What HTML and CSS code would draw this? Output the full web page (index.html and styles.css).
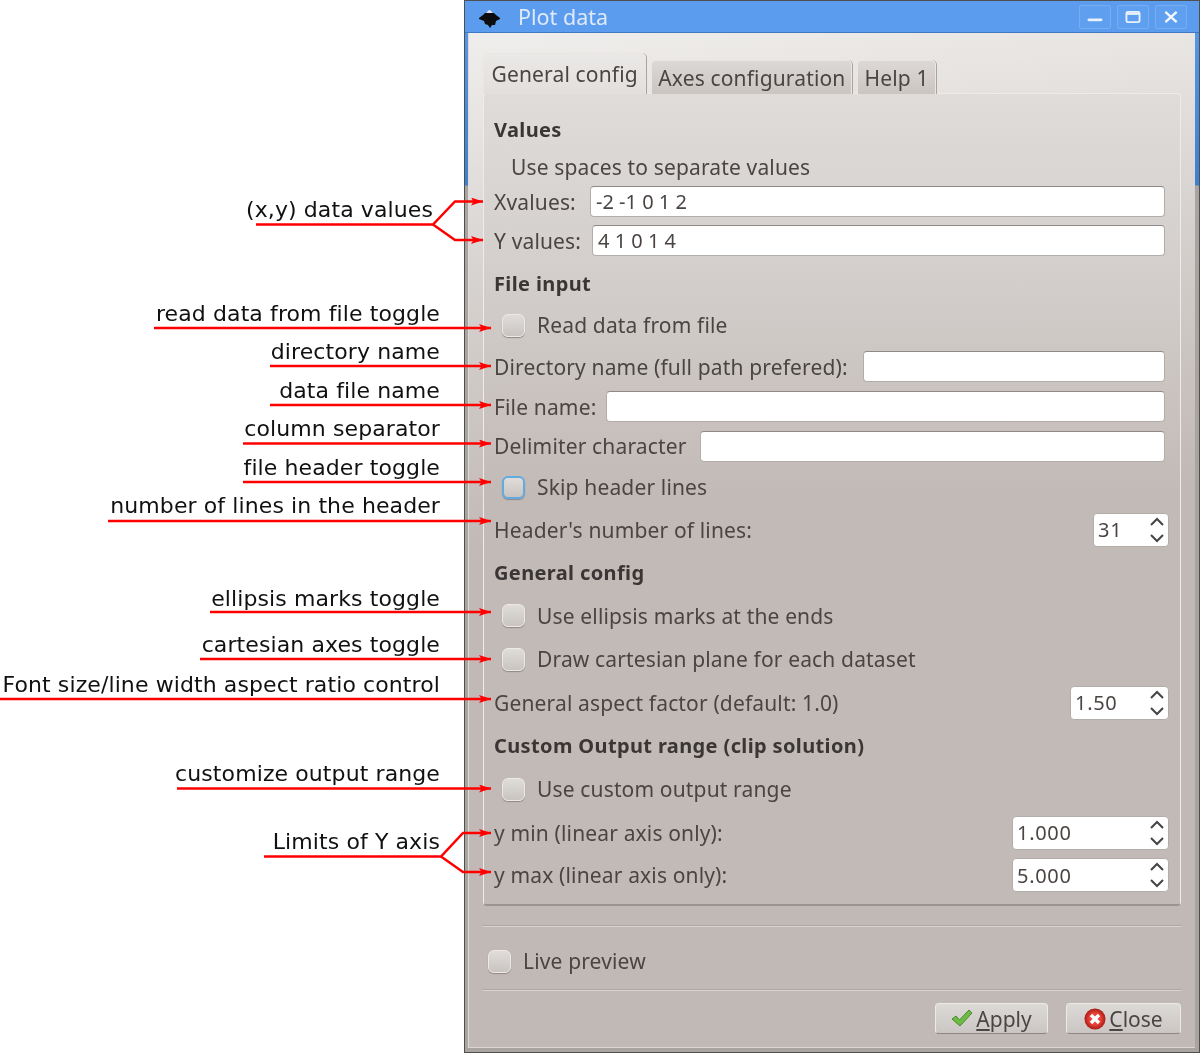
FILE: index.html
```html
<!DOCTYPE html>
<html lang="en">
<head>
<meta charset="utf-8">
<title>Plot data</title>
<link rel="stylesheet" href="styles.css">
</head>
<body>
<main class="window">
  <header class="titlebar">
    <svg class="logo" viewBox="0 0 22 20"><path d="M7.500 5 Q10.500 -1 13.500 5 Z" fill="#e4e6ea"/><path d="M6 5 L15 5 L17 7 L21 10 L21 11 L17 13 L16 17 L13 17 L11 20 L9 17 L6 16 L5 13 L0 11 L0 10 L4 7 Z" fill="#0d0d0f"/></svg>
    <span class="title">Plot data</span>
    <div class="wm-buttons">
      <span class="wm"><svg viewBox="0 0 32 23"><path d="M9.500 14.500 H22.500" stroke="#e8f1fc" stroke-width="3" stroke-linecap="round"/></svg></span>
      <span class="wm"><svg viewBox="0 0 32 23"><rect x="9" y="6" width="14" height="11" rx="1.500" fill="none" stroke="#e8f1fc" stroke-width="2"/><path d="M9 8 H23" stroke="#e8f1fc" stroke-width="2.500"/></svg></span>
      <span class="wm"><svg viewBox="0 0 32 23"><path d="M10 6 L22 17 M22 6 L10 17" stroke="#f4f8fe" stroke-width="2.500"/></svg></span>
    </div>
  </header>
  <div class="content">
    <nav class="tabs">
      <span class="tab tab-active">General config</span>
      <span class="tab">Axes configuration</span>
      <span class="tab">Help 1</span>
    </nav>
    <section class="panel">
      <div class="row"><strong>Values</strong></div>
      <div class="row indent">Use spaces to separate values</div>
      <div class="row"><label class="lx">Xvalues:</label><span class="field">-2 -1 0 1 2</span></div>
      <div class="row"><label class="ly">Y values:</label><span class="field">4 1 0 1 4</span></div>
      <div class="row"><strong>File input</strong></div>
      <div class="row"><span class="check"></span>Read data from file</div>
      <div class="row"><label class="ldir">Directory name (full path prefered):</label><span class="field"></span></div>
      <div class="row"><label class="lfile">File name:</label><span class="field"></span></div>
      <div class="row"><label class="ldelim">Delimiter character</label><span class="field"></span></div>
      <div class="row"><span class="check check-focus"></span>Skip header lines</div>
      <div class="row between"><label>Header's number of lines:</label><span class="spin s31">31<svg class="arrows" viewBox="0 0 16 30"><path d="M2 10 L8 4 L14 10 M2 20 L8 26 L14 20" fill="none" stroke="#444" stroke-width="2"/></svg></span></div>
      <div class="row"><strong>General config</strong></div>
      <div class="row"><span class="check"></span>Use ellipsis marks at the ends</div>
      <div class="row"><span class="check"></span>Draw cartesian plane for each dataset</div>
      <div class="row between"><label>General aspect factor (default: 1.0)</label><span class="spin s150">1.50<svg class="arrows" viewBox="0 0 16 30"><path d="M2 10 L8 4 L14 10 M2 20 L8 26 L14 20" fill="none" stroke="#444" stroke-width="2"/></svg></span></div>
      <div class="row"><strong>Custom Output range (clip solution)</strong></div>
      <div class="row"><span class="check"></span>Use custom output range</div>
      <div class="row between"><label>y min (linear axis only):</label><span class="spin s1000">1.000<svg class="arrows" viewBox="0 0 16 30"><path d="M2 10 L8 4 L14 10 M2 20 L8 26 L14 20" fill="none" stroke="#444" stroke-width="2"/></svg></span></div>
      <div class="row between"><label>y max (linear axis only):</label><span class="spin s1000">5.000<svg class="arrows" viewBox="0 0 16 30"><path d="M2 10 L8 4 L14 10 M2 20 L8 26 L14 20" fill="none" stroke="#444" stroke-width="2"/></svg></span></div>
    </section>
    <hr class="sep sep-first">
    <div class="preview"><span class="check"></span>Live preview</div>
    <hr class="sep">
    <footer class="actions">
      <span class="btn btn-apply"><svg class="btn-icon" viewBox="0 0 22 22"><path d="M1 11 L5 8 L8.500 12 L18 2 L21 5 L9 18 Z" fill="#6cbb45" stroke="#4a8a2c" stroke-width="1"/></svg><span><u>A</u>pply</span></span>
      <span class="btn"><svg class="btn-icon" viewBox="0 0 22 22"><defs><radialGradient id="stop"><stop offset="0.55" stop-color="#e8433a"/><stop offset="1" stop-color="#a81c12"/></radialGradient></defs><circle cx="11" cy="11" r="10.500" fill="url(#stop)"/><path d="M7 7 L15 15 M15 7 L7 15" stroke="#fff" stroke-width="3.500"/></svg><span><u>C</u>lose</span></span>
    </footer>
  </div>
</main>
<svg class="notes" viewBox="0 0 1200 1054">
  <defs>
    <marker id="head" viewBox="0 0 12 8" refX="12" refY="4" markerWidth="12" markerHeight="8" markerUnits="userSpaceOnUse" orient="auto"><path d="M0 0 L12 4 L0 8 L2.500 4 Z" fill="#f00"/></marker>
  </defs>
  <g class="note-lines">
    <path d="M256 224.500 H433 L455 201.500 H483" marker-end="url(#head)"/>
    <path d="M433 224.500 L455 240 H483" marker-end="url(#head)"/>
    <path d="M154 328 H491" marker-end="url(#head)"/>
    <path d="M270 366 H491" marker-end="url(#head)"/>
    <path d="M270 405 H491" marker-end="url(#head)"/>
    <path d="M243 443.500 H491" marker-end="url(#head)"/>
    <path d="M243 482 H491" marker-end="url(#head)"/>
    <path d="M108 521 H491" marker-end="url(#head)"/>
    <path d="M210 612 H491" marker-end="url(#head)"/>
    <path d="M200 659 H491" marker-end="url(#head)"/>
    <path d="M0 699 H491" marker-end="url(#head)"/>
    <path d="M177 788.500 H491" marker-end="url(#head)"/>
    <path d="M264 856.500 H441 L463 833 H491" marker-end="url(#head)"/>
    <path d="M441 856.500 L463 872 H491" marker-end="url(#head)"/>
  </g>
  <g class="note-text">
    <text x="433" y="217">(x,y) data values</text>
    <text x="440" y="321">read data from file toggle</text>
    <text x="440" y="359">directory name</text>
    <text x="440" y="398">data file name</text>
    <text x="440" y="436">column separator</text>
    <text x="440" y="475">file header toggle</text>
    <text x="440" y="513">number of lines in the header</text>
    <text x="440" y="606">ellipsis marks toggle</text>
    <text x="440" y="652">cartesian axes toggle</text>
    <text x="440" y="692">Font size/line width aspect ratio control</text>
    <text x="440" y="781">customize output range</text>
    <text x="440" y="849">Limits of Y axis</text>
  </g>
</svg>
</body>
</html>
```
FILE: styles.css
```css
html, body { margin: 0; padding: 0; background: #fff; }
body { position: relative; width: 1200px; height: 1054px; overflow: hidden; font-family: "Noto Sans", sans-serif; font-size: 21px; letter-spacing: 0.15px; color: #4a4543; }

.window {
  position: absolute; left: 464px; top: 0; width: 736px; height: 1053px; box-sizing: border-box;
  border: 1px solid #4f4f4f; padding: 0 4px 4px 3px;
  display: flex; flex-direction: column;
  background: linear-gradient(#5b9bea 0, #3f7fcf 184px, #aaa4a0 185px);
  filter: blur(0.3px);
}
.titlebar { height: 32px; margin: 0 -4px 0 -3px; padding: 0 12px 0 14px; display: flex; align-items: center; background: #5b9cee; box-shadow: inset 0 -1px 0 #3f79c4; flex: none; }
.logo { width: 22px; height: 20px; margin-top: 2px; }
.title { margin-left: 17px; margin-top: -2px; color: #dfe9f8; font-size: 21.5px; letter-spacing: 0; }
.wm-buttons { margin-left: auto; display: flex; gap: 6px; }
.wm { width: 30px; height: 22px; border: 1px solid #77aef2; background: #5f9fef; border-radius: 2px; display: block; }
.wm svg { display: block; width: 100%; height: 100%; }

.content { flex: 1; padding: 21px 14px 0 14px; display: flex; flex-direction: column; border-bottom: 1px solid #dad6d3; border-left: 1px solid #dedad8;
  background: linear-gradient(174deg, #f0eeec 0, #d6d2cf 250px, #c1b9b5 520px); }

.tabs { display: flex; align-items: flex-end; gap: 5px; height: 40px; position: relative; z-index: 1; margin-bottom: -1px; flex: none; }
.tab { box-sizing: border-box; height: 34px; padding: 0 6px; display: flex; align-items: center; border: 1px solid #e9e6e4; border-bottom: 0; border-radius: 5px 5px 0 0; background: linear-gradient(#dcd8d5, #cbc5c2); box-shadow: 1px 0 0 #a9a3a0; }
.tab-active { height: 41px; padding: 0 7.5px; background: linear-gradient(#ebe9e7, #e2dfdd); }

.panel { box-sizing: border-box; height: 813px; padding: 17px 15px 0 10px; border: 1px solid #eeecea; border-bottom: 2px solid #9a9490; border-radius: 4px;
  background: linear-gradient(#dfdcda 0, #d0cbc8 220px, #c2bab6 400px);
  display: grid; grid-template-rows: 37px 36px 35px 43px 42px 42px 41px 39px 40px 42px 43px 43px 43px 44px 43px 43px 44px 43px 42px; flex: none; }
.row { display: flex; align-items: center; white-space: nowrap; min-width: 0; }
.row strong { color: #3a3635; font-weight: 700; font-size: 20px; letter-spacing: 0.37px; }
.indent { padding-left: 17px; padding-top: 2px; }
.between { justify-content: space-between; margin-right: -4px; }
.lx { flex: 0 0 96px; }
.ly { flex: 0 0 98px; }
.ldir { flex: 0 0 369px; }
.lfile { flex: 0 0 112px; }
.ldelim { flex: 0 0 206px; }

.field { flex: 1; height: 31px; box-sizing: border-box; padding-left: 5px; background: #fff; border: 1px solid #b3adaa; border-top-color: #8f8a87; border-radius: 4px; font-size: 20px; letter-spacing: 0; display: flex; align-items: center; }
.spin { height: 34px; box-sizing: border-box; padding: 0 2px 0 4px; background: #fff; border: 1px solid #b3adaa; border-radius: 4px; font-size: 20px; letter-spacing: 0.7px; display: flex; align-items: center; justify-content: space-between; }
.s31 { width: 76px; }
.s150 { width: 99px; }
.s1000 { width: 157px; }
.arrows { width: 16px; height: 30px; margin-right: 1px; }

.check { flex: none; width: 23px; height: 23px; box-sizing: border-box; margin: 0 12px 0 8px; border: 1px solid #ece9e7; border-radius: 6px; background: linear-gradient(#dfdcda, #c9c4c1); box-shadow: 0 1px 1px #8e8885; }
.check-focus { border: 2px solid #62abe0; }

.sep { margin: 0; border: 0; border-top: 1px solid #ada7a3; border-bottom: 1px solid #d9d5d2; flex: none; height: 0; }
.sep-first { margin-top: 19px; }
.preview { box-sizing: border-box; height: 62px; padding-top: 6px; display: flex; align-items: center; flex: none; }
.preview .check { margin: 0 12px 0 5px; }
.actions { display: flex; justify-content: flex-end; gap: 18px; margin-top: 12px; }
.btn { box-sizing: border-box; width: 115px; height: 31px; display: flex; align-items: center; justify-content: center; gap: 3px; border: 1px solid #ece9e7; border-bottom-color: #8d8784; border-radius: 4px; background: linear-gradient(#dcd9d6, #cbc6c3); font-size: 21px; letter-spacing: 0; }
.btn-apply { width: 113px; }
.btn-icon { width: 22px; height: 22px; }

.notes { position: absolute; left: 0; top: 0; width: 1200px; height: 1054px; pointer-events: none; filter: blur(0.25px); }
.note-lines path { fill: none; stroke: #f00; stroke-width: 2.5; }
.note-text text { font-family: "DejaVu Sans", sans-serif; font-size: 22px; letter-spacing: 0.1px; fill: #111; text-anchor: end; }
```
